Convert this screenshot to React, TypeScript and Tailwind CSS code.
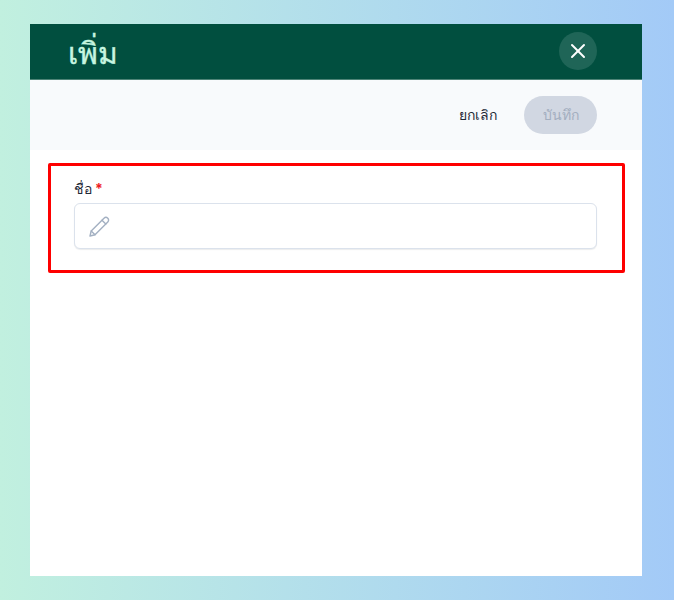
import { X } from 'lucide-react';

export default function App() {
  return (
    <div className="h-[600px] w-full overflow-hidden bg-gradient-to-r from-[#c1f0df] to-[#a3caf7] px-[30px] py-6 font-['Inter',sans-serif]">
      <div className="flex h-[552px] w-[612px] flex-col bg-white">
        <header className="flex h-14 shrink-0 items-center justify-between border-b border-[#4d8477] bg-[#014f3f] pb-px pl-[38px] pr-[45px]">
          <h1 className="pt-[3px] text-3xl font-medium text-[#c6f6e0] [-webkit-text-stroke:0.4px_#c6f6e0]">เพิ่ม</h1>
          <button className="flex h-[38px] w-[38px] items-center justify-center rounded-full bg-[#1f6557] text-white">
            <X size={24} strokeWidth={2} />
          </button>
        </header>
        <div className="flex h-[70px] shrink-0 items-center justify-end gap-[27px] bg-[#f8fafc] pr-[45px]">
          <button className="text-sm text-[#1f2937]">ยกเลิก</button>
          <button className="h-[38px] w-[73px] rounded-full bg-[#d1d7e2] text-sm text-[#a3aebf]">บันทึก</button>
        </div>
        <div className="px-[18px] pt-[13px]">
          <div className="h-[110px] w-[577px] rounded-[2px] border-[3px] border-[#fe0000] pl-[23px] pr-[25px] pt-[12px]">
            <label className="flex h-[22px] items-center gap-[3px] text-sm font-light text-[#1f2937]">
              ชื่อ <span className="font-bold text-[#ee1c25]">*</span>
            </label>
            <div className="mt-[3px] flex h-[46px] items-center rounded-md border border-[#dbe2ec] bg-white pl-[12px] shadow-[0_1px_1px_rgba(15,23,42,0.08)]">
              <svg viewBox="0 0 24 24" className="mt-px h-6 w-6 text-[#a3b0c2]" fill="none" stroke="currentColor" strokeWidth="1.4" strokeLinejoin="round" strokeLinecap="round">
                <path d="M3 21l1.2-5L17 3.2a2.6 2.6 0 0 1 3.8 3.8L8 19.8 3 21z" />
                <path d="M15 5.2l3.8 3.8" />
                <path d="M4.2 16l3.8 3.8" />
              </svg>
            </div>
          </div>
        </div>
      </div>
    </div>
  );
}
